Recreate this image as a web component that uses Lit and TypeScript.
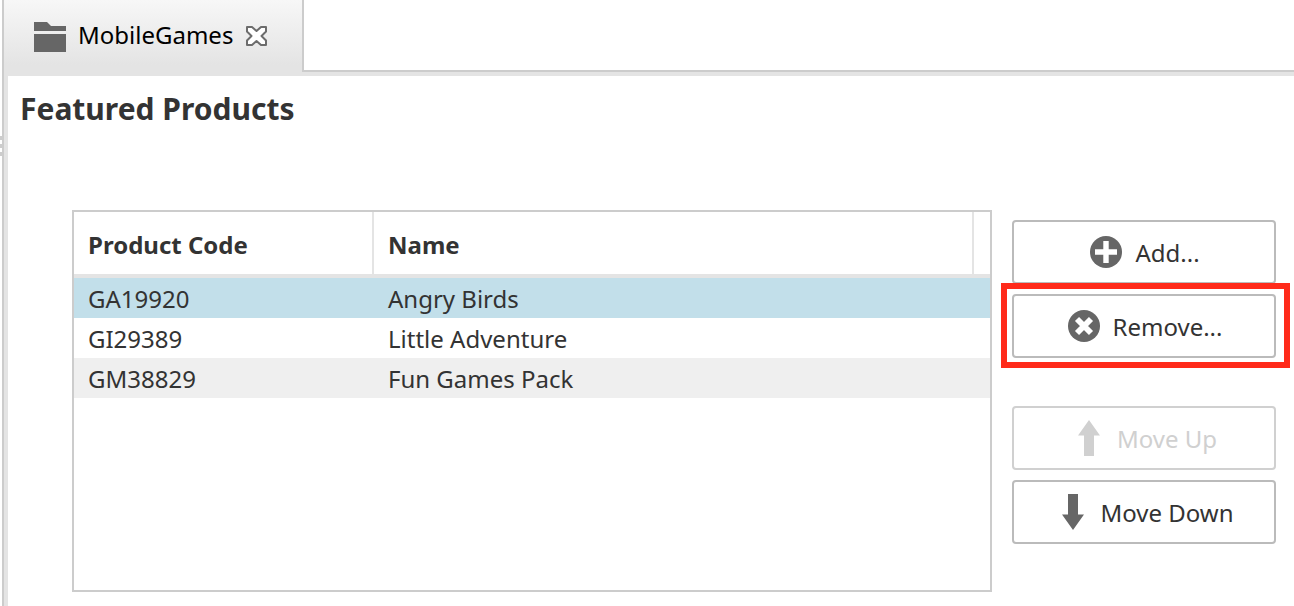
import { LitElement, html, css, nothing } from "lit";
import { customElement, state } from "lit/decorators.js";
import { classMap } from "lit/directives/class-map.js";

interface Product {
  code: string;
  name: string;
}

const folderIcon = html`<svg class="folder" viewBox="0 0 34 32" width="34" height="32" aria-hidden="true">
  <path d="M2 2H15L19 6H34V11H2Z M2 14H34V32H2Z" fill="#666" />
</svg>`;

const closeIcon = html`<svg viewBox="0 0 24 24" width="24" height="24" aria-hidden="true">
  <path
    d="M3 3H8L12.5 7L17 3H22V7.5L17.5 12L22 16.5V21H17L12.5 17L8 21H3V16.5L7.5 12L3 7.5Z"
    fill="#fff" stroke="#6c6c6c" stroke-width="2" stroke-linejoin="round" />
</svg>`;

const addIcon = html`<svg viewBox="0 0 32 32" width="32" height="32" aria-hidden="true">
  <circle cx="16" cy="16" r="16" fill="#666" />
  <path d="M16 5V27M5 16H27" stroke="#fff" stroke-width="5.4" />
</svg>`;

const removeIcon = html`<svg viewBox="0 0 32 32" width="32" height="32" aria-hidden="true">
  <circle cx="16" cy="16" r="16" fill="#666" />
  <path d="M9 9L23 23M23 9L9 23" stroke="#fff" stroke-width="5.8" />
</svg>`;

const upIcon = html`<svg viewBox="0 0 36 36" width="36" height="36" aria-hidden="true">
  <path d="M18 0L29 15.5H23V36H13V15.5H7Z" fill="currentColor" />
</svg>`;

const downIcon = html`<svg viewBox="0 0 36 36" width="36" height="36" aria-hidden="true">
  <path d="M19 36L30 20.5H24V0H14V20.5H8Z" fill="currentColor" />
</svg>`;

@customElement("app-root")
export class AppRoot extends LitElement {
  static styles = css`
    :host {
      display: flex;
      min-height: 100vh;
      background: #fff;
      color: #333;
      font: 24px/40px "Noto Sans", "Open Sans", sans-serif;
    }
    * {
      box-sizing: border-box;
    }
    .splitter {
      flex: none;
      width: 4px;
      padding-top: 136px;
      border-right: 2px solid #ccc;
    }
    .dot {
      width: 2px;
      height: 4px;
      margin-bottom: 4px;
      background: #ccc;
    }
    .workspace {
      flex: 1;
      min-width: 0;
      display: flex;
      flex-direction: column;
    }
    .tabs {
      display: flex;
      height: 72px;
    }
    .tab {
      display: flex;
      align-items: center;
      padding: 0 34px 0 28px;
      border-right: 2px solid #ccc;
      background: linear-gradient(#f7f7f7, #e4e4e4 90%);
      color: #000;
    }
    .tab-title {
      margin: 0 11px 0 12px;
      padding-bottom: 2px;
    }
    .folder {
      display: block;
    }
    .close {
      display: flex;
      padding: 0;
      border: 0;
      background: none;
    }
    .rest {
      flex: 1;
      border-bottom: 2px solid #ccc;
    }
    .editor {
      flex: 1;
      display: flex;
      flex-direction: column;
      padding: 13px 18px 14px 12px;
      border: solid #e4e4e4;
      border-width: 4px 0 0 4px;
    }
    h1 {
      margin: 0 0 81px;
      font-size: 30px;
      line-height: 40px;
    }
    .content {
      flex: 1;
      display: flex;
      gap: 20px;
      padding-left: 52px;
    }
    .list {
      flex: 1;
      min-width: 0;
      border: 2px solid #ccc;
    }
    table {
      width: 100%;
      table-layout: fixed;
      border-collapse: separate;
      border-spacing: 0;
    }
    th,
    td {
      padding: 2px 14px 0;
      text-align: left;
      overflow: hidden;
      white-space: nowrap;
    }
    th {
      height: 66px;
      padding-top: 4px;
      border-right: 2px solid #e4e4e4;
      border-bottom: 4px solid #e4e4e4;
      line-height: 58px;
    }
    td {
      height: 40px;
      line-height: 38px;
    }
    .code {
      width: 300px;
    }
    .gutter {
      width: 16px;
      padding: 0;
      border-right: 0;
    }
    .row:nth-child(odd) {
      background: #efefef;
    }
    .row.selected {
      background: #c2dfea;
    }
    .actions {
      flex: none;
      width: 264px;
      display: flex;
      flex-direction: column;
      gap: 10px;
      padding-top: 10px;
    }
    .action {
      display: flex;
      align-items: center;
      justify-content: center;
      gap: 13px;
      width: 100%;
      height: 64px;
      padding: 0 0 0 2px;
      border: 2px solid #bbb;
      border-radius: 4px;
      background: #fff;
      color: #333;
      font: inherit;
    }
    .action span {
      padding-top: 2px;
    }
    .action svg {
      flex: none;
      color: #666;
    }
    .action.move {
      gap: 10px;
      padding: 0;
    }
    .action:disabled,
    .action:disabled svg {
      border-color: #d0d0d0;
      color: #d0d0d0;
    }
    .marked {
      position: relative;
      margin-bottom: 38px;
    }
    .marked::after {
      content: "";
      position: absolute;
      inset: -11px -14px -10px -11px;
      border: 6px solid #ff2a1a;
      pointer-events: none;
    }
  `;

  @state() private products: Product[] = [
    { code: "GA19920", name: "Angry Birds" },
    { code: "GI29389", name: "Little Adventure" },
    { code: "GM38829", name: "Fun Games Pack" },
  ];

  @state() private selected = 0;

  private move(step: number) {
    const target = this.selected + step;
    const next = [...this.products];
    [next[this.selected], next[target]] = [next[target], next[this.selected]];
    this.products = next;
    this.selected = target;
  }

  private remove() {
    this.products = this.products.filter((_, i) => i !== this.selected);
    this.selected = Math.max(0, Math.min(this.selected, this.products.length - 1));
  }

  render() {
    return html`
      <div class="splitter">
        <div class="dot"></div>
        <div class="dot"></div>
        <div class="dot"></div>
      </div>
      <div class="workspace">
        <header class="tabs">
          <div class="tab">
            ${folderIcon}
            <span class="tab-title">MobileGames</span>
            <button class="close" aria-label="Close">${closeIcon}</button>
          </div>
          <div class="rest"></div>
        </header>
        <main class="editor">
          <h1>Featured Products</h1>
          <div class="content">
            <div class="list">
              <table>
                <thead>
                  <tr>
                    <th class="code">Product Code</th>
                    <th>Name</th>
                    <th class="gutter"></th>
                  </tr>
                </thead>
                <tbody>
                  ${this.products.map(
                    (p, i) => html`<tr
                      class=${classMap({ row: true, selected: i === this.selected })}
                      aria-selected=${i === this.selected ? "true" : nothing}
                      @click=${() => (this.selected = i)}
                    >
                      <td>${p.code}</td>
                      <td colspan="2">${p.name}</td>
                    </tr>`
                  )}
                </tbody>
              </table>
            </div>
            <div class="actions">
              <button class="action">${addIcon}<span>Add...</span></button>
              <div class="marked">
                <button class="action" @click=${this.remove}>${removeIcon}<span>Remove...</span></button>
              </div>
              <button class="action move" ?disabled=${this.selected === 0} @click=${() => this.move(-1)}>
                ${upIcon}<span>Move Up</span>
              </button>
              <button
                class="action move"
                ?disabled=${this.selected >= this.products.length - 1}
                @click=${() => this.move(1)}
              >
                ${downIcon}<span>Move Down</span>
              </button>
            </div>
          </div>
        </main>
      </div>
    `;
  }
}
